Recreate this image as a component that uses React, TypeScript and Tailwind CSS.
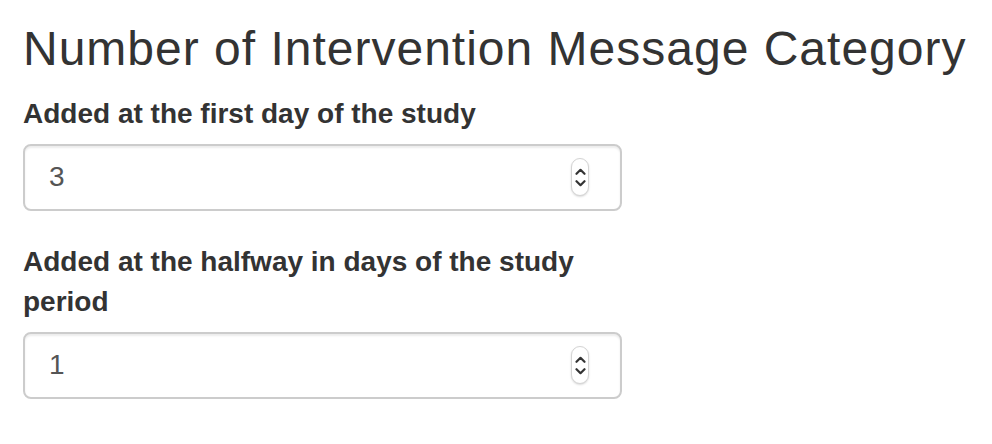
import React from "react";

function Spinner() {
  return (
    <div className="pointer-events-none absolute right-[33px] top-1/2 flex h-[38px] w-[18px] -translate-y-1/2 flex-col items-center justify-center gap-[5px] rounded-full border border-[#d4d4d4] bg-white shadow-[0_1px_2px_rgba(0,0,0,0.15)]">
      <svg width="11" height="7" viewBox="0 0 11 7" fill="none">
        <path d="M1.5 5.8 L5.5 1.8 L9.5 5.8" stroke="#333" strokeWidth="2.2" strokeLinecap="round" strokeLinejoin="round" />
      </svg>
      <svg width="11" height="7" viewBox="0 0 11 7" fill="none">
        <path d="M1.5 1.2 L5.5 5.2 L9.5 1.2" stroke="#333" strokeWidth="2.2" strokeLinecap="round" strokeLinejoin="round" />
      </svg>
    </div>
  );
}

function NumberField({ label, value }: { label: string; value: string }) {
  return (
    <div className="mb-[31px] w-[600px]">
      <label className="mb-[10px] block text-[28px] font-bold leading-[40px] text-[#333]">{label}</label>
      <div className="relative w-[599px]">
        <div className="flex h-[67px] items-center rounded-[8px] border-2 border-[#cccccc] bg-white px-[24px] text-[28px] text-[#555] shadow-[inset_0_2px_2px_rgba(0,0,0,0.075)]">
          {value}
        </div>
        <Spinner />
      </div>
    </div>
  );
}

export default function App() {
  return (
    <div className="min-h-[444px] bg-white pl-[23px] pt-[23px]" style={{ fontFamily: '"Liberation Sans", Arial, sans-serif' }}>
      <h3 className="mb-[18px] whitespace-nowrap text-[48px] font-normal leading-[52.8px] tracking-[1px] text-[#333]">
        Number of Intervention Message Category
      </h3>
      <NumberField label="Added at the first day of the study" value="3" />
      <NumberField label="Added at the halfway in days of the study period" value="1" />
    </div>
  );
}
